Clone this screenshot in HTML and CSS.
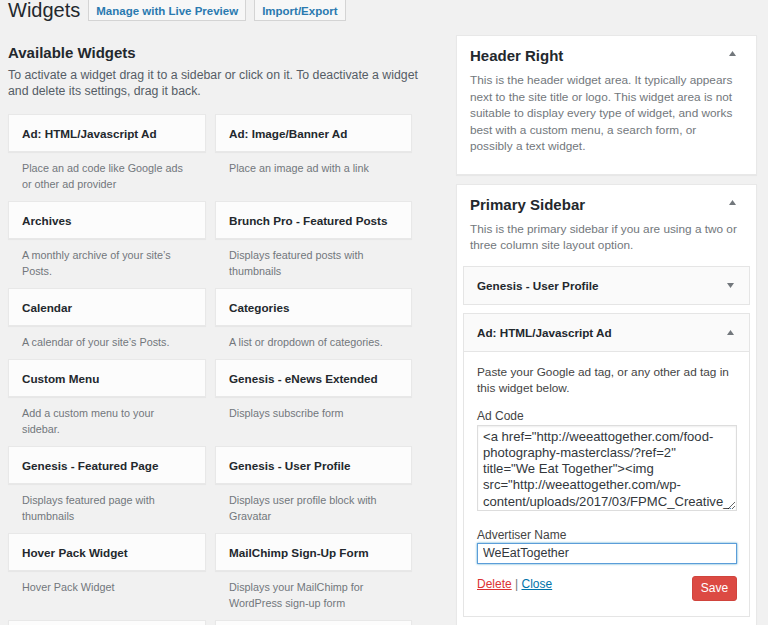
FILE: index.html
```html
<!DOCTYPE html>
<html lang="en">
<head>
<meta charset="utf-8">
<title>Widgets</title>
<link rel="stylesheet" href="styles.css">
</head>
<body>
<div class="wrap">
  <div class="page-head">
    <h1 class="page-title">Widgets</h1>
    <a class="head-btn" href="#">Manage with Live Preview</a>
    <a class="head-btn" href="#">Import/Export</a>
  </div>
  <div class="columns">
    <section class="available">
      <h2 class="section-title">Available Widgets</h2>
      <p class="intro">To activate a widget drag it to a sidebar or click on it. To deactivate a widget and delete its settings, drag it back.</p>
      <div class="widget-grid">
        <div class="widget-item"><div class="widget-card">Ad: HTML/Javascript Ad</div><p class="widget-desc">Place an ad code like Google ads or other ad provider</p></div>
        <div class="widget-item"><div class="widget-card">Ad: Image/Banner Ad</div><p class="widget-desc">Place an image ad with a link</p></div>
        <div class="widget-item"><div class="widget-card">Archives</div><p class="widget-desc">A monthly archive of your site’s Posts.</p></div>
        <div class="widget-item"><div class="widget-card">Brunch Pro - Featured Posts</div><p class="widget-desc">Displays featured posts with thumbnails</p></div>
        <div class="widget-item"><div class="widget-card">Calendar</div><p class="widget-desc">A calendar of your site’s Posts.</p></div>
        <div class="widget-item"><div class="widget-card">Categories</div><p class="widget-desc">A list or dropdown of categories.</p></div>
        <div class="widget-item"><div class="widget-card">Custom Menu</div><p class="widget-desc">Add a custom menu to your sidebar.</p></div>
        <div class="widget-item"><div class="widget-card">Genesis - eNews Extended</div><p class="widget-desc">Displays subscribe form</p></div>
        <div class="widget-item"><div class="widget-card">Genesis - Featured Page</div><p class="widget-desc">Displays featured page with thumbnails</p></div>
        <div class="widget-item"><div class="widget-card">Genesis - User Profile</div><p class="widget-desc">Displays user profile block with Gravatar</p></div>
        <div class="widget-item"><div class="widget-card">Hover Pack Widget</div><p class="widget-desc">Hover Pack Widget</p></div>
        <div class="widget-item"><div class="widget-card">MailChimp Sign-Up Form</div><p class="widget-desc">Displays your MailChimp for WordPress sign-up form</p></div>
        <div class="widget-item"><div class="widget-card"></div></div>
        <div class="widget-item"><div class="widget-card"></div></div>
      </div>
    </section>
    <section class="sidebars">
      <div class="sidebar-panel">
        <div class="panel-head">
          <h2 class="panel-title">Header Right</h2>
          <svg class="toggle" width="7" height="5" viewBox="0 0 7 5"><polygon points="0,5 7,5 3.5,0"/></svg>
        </div>
        <p class="panel-desc">This is the header widget area. It typically appears next to the site title or logo. This widget area is not suitable to display every type of widget, and works best with a custom menu, a search form, or possibly a text widget.</p>
      </div>
      <div class="sidebar-panel">
        <div class="panel-head">
          <h2 class="panel-title">Primary Sidebar</h2>
          <svg class="toggle" width="7" height="5" viewBox="0 0 7 5"><polygon points="0,5 7,5 3.5,0"/></svg>
        </div>
        <p class="panel-desc">This is the primary sidebar if you are using a two or three column site layout option.</p>
        <div class="widget">
          <div class="widget-top">
            <h3 class="widget-title">Genesis - User Profile</h3>
            <svg class="toggle" width="7" height="5" viewBox="0 0 7 5"><polygon points="0,0 7,0 3.5,5"/></svg>
          </div>
        </div>
        <div class="widget">
          <div class="widget-top">
            <h3 class="widget-title">Ad: HTML/Javascript Ad</h3>
            <svg class="toggle" width="7" height="5" viewBox="0 0 7 5"><polygon points="0,5 7,5 3.5,0"/></svg>
          </div>
          <div class="widget-inside">
            <p class="widget-help">Paste your Google ad tag, or any other ad tag in this widget below.</p>
            <label class="field-label" for="adcode">Ad Code</label>
            <textarea id="adcode" class="code-area">&lt;a href="http://weeattogether.com/food-photography-masterclass/?ref=2" title="We Eat Together"&gt;&lt;img src="http://weeattogether.com/wp-content/uploads/2017/03/FPMC_Creative_3.jpg" alt="Food Photography Masterclass" /&gt;&lt;/a&gt;</textarea>
            <label class="field-label label-gap" for="advname">Advertiser Name</label>
            <input id="advname" class="text-input" type="text" value="WeEatTogether">
            <div class="widget-actions">
              <div class="action-links"><a class="link-delete" href="#">Delete</a> <span class="sep">|</span> <a class="link-close" href="#">Close</a></div>
              <button class="save-btn" type="button">Save</button>
            </div>
          </div>
        </div>
      </div>
    </section>
  </div>
</div>
</body>
</html>
```
FILE: styles.css
```css
html { overflow: hidden; }
body {
  margin: 0;
  background: #f1f1f1;
  font-family: "Liberation Sans", Arial, sans-serif;
  color: #23282d;
}
.wrap { padding: 0 11px 0 8px; }

.page-head { display: flex; align-items: flex-start; height: 22px; }
.page-title { margin: 0; font-size: 20px; font-weight: 400; line-height: 20px; color: #23282d; }
.head-btn {
  margin: -4px 0 0 8px;
  box-sizing: border-box;
  height: 25px;
  padding: 7px 7px 0;
  line-height: 14px;
  font-size: 11.5px;
  font-weight: 700;
  color: #2a7ab0;
  text-decoration: none;
  background: #f7f7f7;
  border: 1px solid #d4d4d4;
}

.columns { display: flex; gap: 44px; margin-top: 13px; align-items: flex-start; }
.available { width: 404px; flex: none; }
.sidebars { width: 301px; flex: none; }

.section-title { margin: 8px 0 0; font-size: 15px; line-height: 20px; font-weight: 700; }
.intro { margin: 5px -24px 0 0; font-size: 12.3px; line-height: 15.5px; color: #555d66; }

.widget-grid {
  display: grid;
  grid-template-columns: 198px 197px;
  column-gap: 9px;
  margin-top: 15px;
}
.widget-card {
  box-sizing: border-box;
  height: 38px;
  display: flex;
  align-items: center;
  padding: 0 13px;
  background: #fcfcfc;
  border: 1px solid #e8e8e8;
  box-shadow: 0 1px 1px rgba(0,0,0,.04);
  font-size: 11.7px;
  font-weight: 700;
}
.widget-desc {
  margin: 0;
  padding: 8px 14px 9px;
  font-size: 10.8px;
  line-height: 16px;
  color: #72777c;
}

.sidebar-panel {
  background: #fff;
  border: 1px solid #e8e8e8;
  box-shadow: 0 1px 1px rgba(0,0,0,.04);
  padding: 10px 6px 19px;
  margin-bottom: 9px;
}
.panel-head { display: flex; justify-content: space-between; align-items: flex-start; padding: 0 14px 0 7px; }
.panel-title { margin: 0; font-size: 15px; line-height: 20px; font-weight: 700; }
.toggle { fill: #72777c; flex: none; }
.panel-head .toggle { margin-top: 5px; }
.panel-desc { margin: 6px 0 0; padding: 0 9px 0 7px; font-size: 11.8px; line-height: 16.5px; color: #72777c; }

.widget { margin-top: 12px; border: 1px solid #e5e5e5; background: #fff; }
.widget + .widget { margin-top: 8px; }
.widget-top {
  height: 37px;
  display: flex;
  align-items: center;
  justify-content: space-between;
  padding: 0 15px 0 13px;
  background: #fafafa;
}
.widget-title { margin: 0; font-size: 11.7px; font-weight: 700; }
.widget-inside { border-top: 1px solid #e5e5e5; padding: 12px 12px 15px 13px; }
.widget-help { margin: 0; font-size: 11.8px; line-height: 16px; color: #444; }
.field-label { display: block; margin-top: 12px; font-size: 12px; line-height: 16px; color: #444; }
.label-gap { margin-top: 16px; }
.code-area {
  display: block;
  box-sizing: border-box;
  width: 100%;
  height: 86px;
  margin: 1px 0 0;
  padding: 3px 5px;
  border: 1px solid #ddd;
  box-shadow: inset 0 1px 2px rgba(0,0,0,.07);
  font-family: "Liberation Sans", Arial, sans-serif;
  font-size: 13.1px;
  line-height: 16.3px;
  color: #32373c;
  overflow: hidden;
  background: #fff;
}
.text-input {
  display: block;
  box-sizing: border-box;
  width: 100%;
  height: 21px;
  margin: 0;
  padding: 0 5px;
  border: 1px solid #5b9dd9;
  box-shadow: 0 0 2px rgba(30,140,190,.8);
  font-family: "Liberation Sans", Arial, sans-serif;
  font-size: 12.5px;
  color: #32373c;
  outline: none;
}
.widget-actions { display: flex; justify-content: space-between; align-items: flex-start; margin-top: 12px; }
.action-links { font-size: 12px; line-height: 16px; color: #72777c; }
.link-delete { color: #dc3232; }
.link-close { color: #0073aa; }
.save-btn {
  width: 45px;
  height: 25px;
  padding: 0;
  border: 1px solid #d0443d;
  border-radius: 3px;
  background: #dc4a43;
  color: #fff;
  font-family: "Liberation Sans", Arial, sans-serif;
  font-size: 12px;
}
```
